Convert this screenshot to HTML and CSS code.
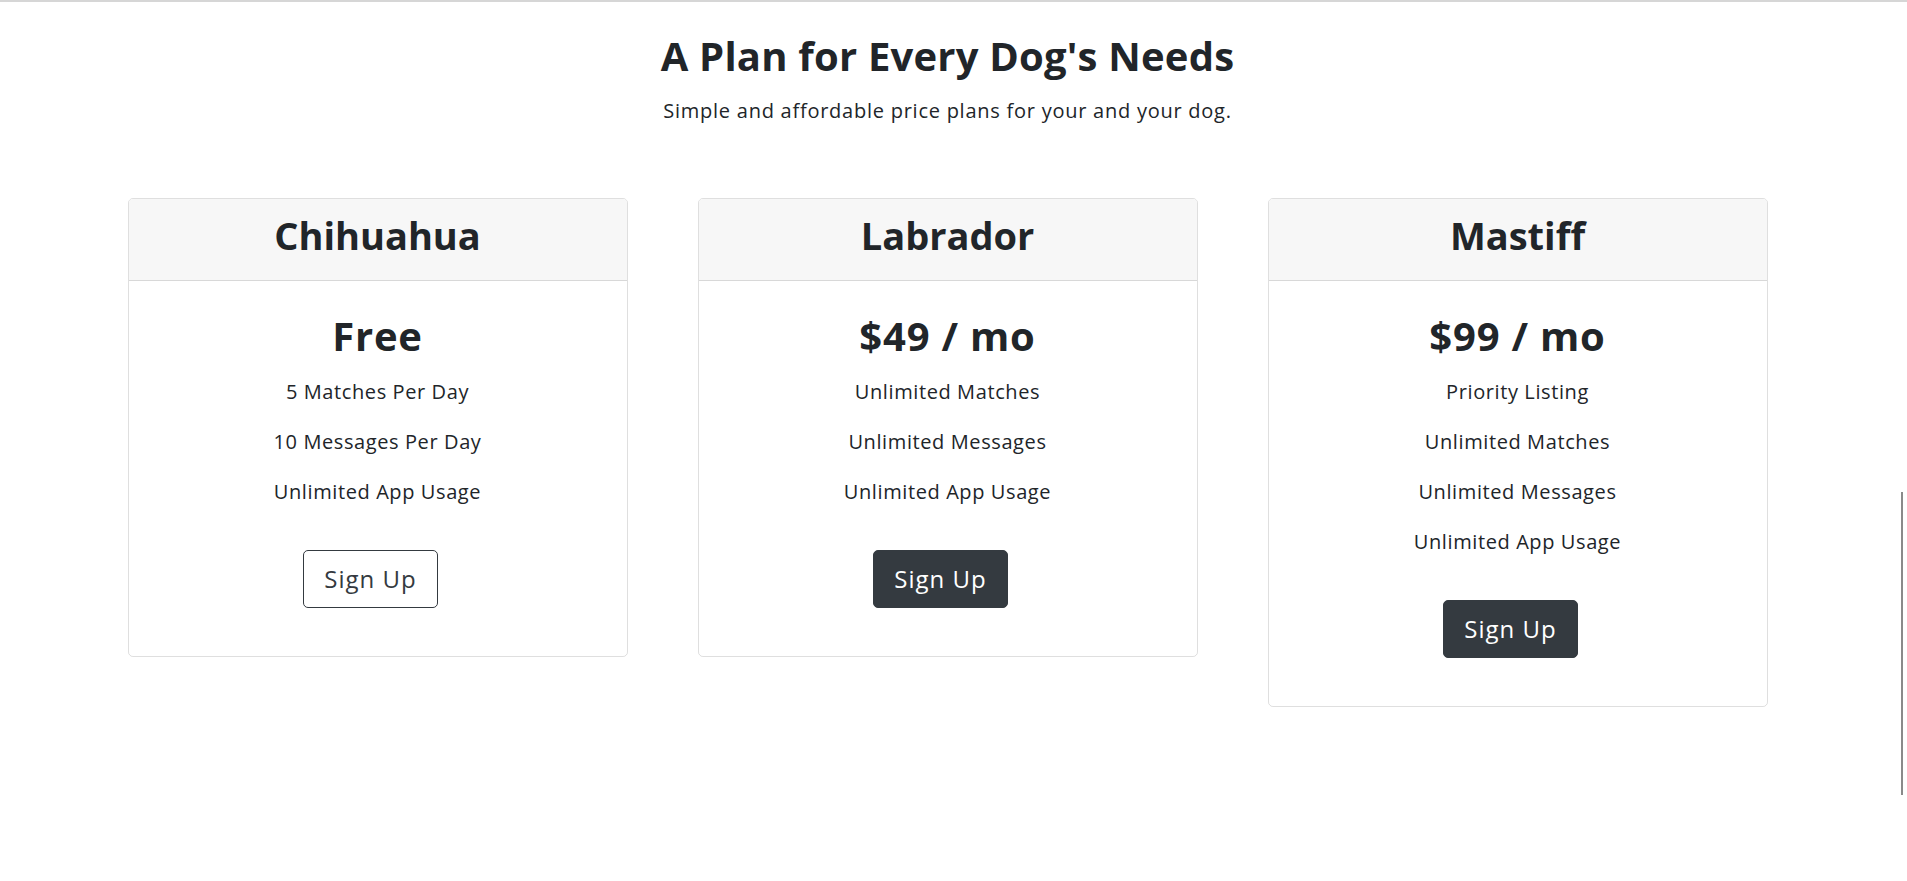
FILE: index.html
```html
<!DOCTYPE html>
<html lang="en">
<head>
<meta charset="utf-8">
<title>Pricing</title>
<link rel="stylesheet" href="styles.css">
</head>
<body>
<section class="pricing">
  <header class="pricing-head">
    <h1 class="pricing-title">A Plan for Every Dog's Needs</h1>
    <p class="pricing-lead">Simple and affordable price plans for your and your dog.</p>
  </header>
  <div class="plans">
    <article class="plan">
      <div class="plan-header"><h3 class="plan-name">Chihuahua</h3></div>
      <div class="plan-body">
        <h2 class="plan-price">Free</h2>
        <ul class="plan-features">
          <li>5 Matches Per Day</li>
          <li>10 Messages Per Day</li>
          <li>Unlimited App Usage</li>
        </ul>
        <button class="btn btn-outline" type="button">Sign Up</button>
      </div>
    </article>
    <article class="plan">
      <div class="plan-header"><h3 class="plan-name">Labrador</h3></div>
      <div class="plan-body">
        <h2 class="plan-price">$49 / mo</h2>
        <ul class="plan-features">
          <li>Unlimited Matches</li>
          <li>Unlimited Messages</li>
          <li>Unlimited App Usage</li>
        </ul>
        <button class="btn btn-dark" type="button">Sign Up</button>
      </div>
    </article>
    <article class="plan">
      <div class="plan-header"><h3 class="plan-name">Mastiff</h3></div>
      <div class="plan-body">
        <h2 class="plan-price">$99 / mo</h2>
        <ul class="plan-features">
          <li>Priority Listing</li>
          <li>Unlimited Matches</li>
          <li>Unlimited Messages</li>
          <li>Unlimited App Usage</li>
        </ul>
        <button class="btn btn-dark" type="button">Sign Up</button>
      </div>
    </article>
  </div>
</section>
<div class="scroll-thumb"></div>
</body>
</html>
```

FILE: styles.css
```css
html, body {
  margin: 0;
  padding: 0;
  background: #fff;
}

body {
  border-top: 2px solid #d6d6d6;
  padding-right: 12px;
  font-family: "Open Sans", "Noto Sans", sans-serif;
  color: #212529;
  height: 879px;
  overflow: hidden;
}

.pricing {
  display: flex;
  flex-direction: column;
  align-items: center;
  padding-top: 30px;
}

.pricing-head {
  text-align: center;
}

.pricing-title {
  margin: 0;
  font-size: 40px;
  line-height: 48px;
  font-weight: 700;
  letter-spacing: 0.2px;
}

.pricing-lead {
  margin: 16px 0 0;
  font-size: 20px;
  line-height: 30px;
  font-weight: 400;
  letter-spacing: 0.75px;
}

.plans {
  display: grid;
  grid-template-columns: repeat(3, 500px);
  column-gap: 70px;
  align-items: start;
  margin-top: 72px;
}

.plan {
  border: 1px solid rgba(0, 0, 0, 0.125);
  border-radius: 5px;
  text-align: center;
  overflow: hidden;
}

.plan-header {
  background: #f7f7f7;
  border-bottom: 1px solid rgba(0, 0, 0, 0.125);
  padding: 12px 20px 21px;
}

.plan-name {
  margin: 0;
  font-size: 38px;
  line-height: 48px;
  font-weight: 700;
}

.plan-body {
  padding: 31px 20px 48px;
  display: flex;
  flex-direction: column;
  align-items: center;
}

.plan-price {
  margin: 0;
  font-size: 40px;
  line-height: 48px;
  font-weight: 700;
  letter-spacing: 0.8px;
}

.plan-features {
  list-style: none;
  margin: 17px 0 0;
  padding: 0;
}

.plan-features li {
  font-size: 20px;
  line-height: 30px;
  margin-bottom: 20px;
  letter-spacing: 0.6px;
}

.plan-features li:last-child {
  margin-bottom: 0;
}

.btn {
  margin-top: 43px;
  margin-right: 14px;
  font-family: inherit;
  font-size: 24px;
  line-height: 36px;
  letter-spacing: 1px;
  padding: 10px 20px;
  border-radius: 5px;
  border: 1px solid #343a40;
  cursor: pointer;
}

.btn-outline {
  background: #fff;
  color: #343a40;
}

.btn-dark {
  background: #343a40;
  color: #fff;
}

.scroll-thumb {
  position: fixed;
  right: 4px;
  top: 492px;
  width: 2px;
  height: 303px;
  background: #8a8a8a;
}
```
